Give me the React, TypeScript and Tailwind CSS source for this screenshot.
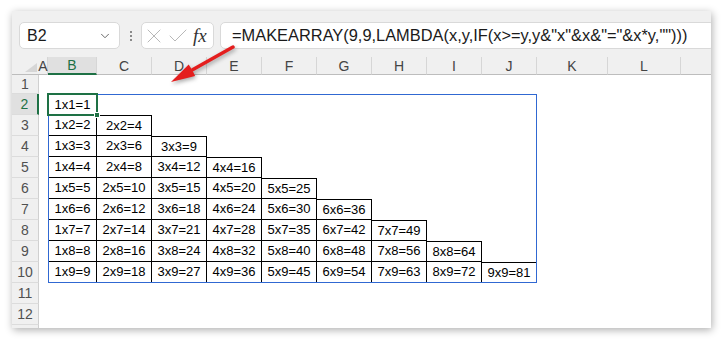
import clsx from 'clsx'
import { ChevronDown, X, Check } from 'lucide-react'

const cols = [
  { name: 'A', w: 'w-[9px]' },
  { name: 'B', w: 'w-[49px]', active: true },
  { name: 'C', w: 'w-[55px]' },
  { name: 'D', w: 'w-[55px]' },
  { name: 'E', w: 'w-[55px]' },
  { name: 'F', w: 'w-[55px]' },
  { name: 'G', w: 'w-[55px]' },
  { name: 'H', w: 'w-[55px]' },
  { name: 'I', w: 'w-[55px]' },
  { name: 'J', w: 'w-[55px]' },
  { name: 'K', w: 'w-[71px]' },
  { name: 'L', w: 'w-[73px]' },
  { name: '', w: 'flex-1' },
]

const rows = [1, 2, 3, 4, 5, 6, 7, 8, 9, 10, 11, 12, 13]

const cells: { x: number; y: number }[] = []
for (let y = 1; y <= 9; y++) {
  for (let x = 1; x <= 9; x++) cells.push({ x, y })
}

export default function App() {
  return (
    <div className="w-[723px] h-[341px] bg-white pl-[12px] pt-[11px] font-['Liberation_Sans',Arial,sans-serif]">
      <div className="relative w-[699px] h-[317px] overflow-hidden bg-[#f0f0f0] shadow-[1px_2px_8px_rgba(0,0,0,0.32)]">
        {/* Formula bar */}
        <div className="flex items-start h-[46px] pt-[11px] pl-[7px]">
          <div className="flex items-center justify-between w-[101px] h-[27px] rounded-[5px] border border-[#d9d9d9] bg-white pl-[7px] pr-[7px] text-[16px] text-[#1a1a1a]">
            <span>B2</span>
            <ChevronDown size={14} strokeWidth={1.5} className="text-[#555]" />
          </div>
          <div className="flex w-[21px] h-[27px] items-center justify-center">
            <div className="flex flex-col gap-[2px]">
              <span className="w-[2px] h-[2px] bg-[#8a8a8a]" />
              <span className="w-[2px] h-[2px] bg-[#8a8a8a]" />
              <span className="w-[2px] h-[2px] bg-[#8a8a8a]" />
            </div>
          </div>
          <div className="flex items-center w-[73px] h-[27px] rounded-[5px] border border-[#d9d9d9] bg-white">
            <X size={24} strokeWidth={1} className="text-[#b8b8b8]" />
            <Check size={24} strokeWidth={1} className="text-[#b8b8b8]" />
            <span className="ml-[3px] font-['Liberation_Serif',serif] italic text-[19px] leading-none text-[#333]">fx</span>
          </div>
          <div className="flex items-center flex-1 ml-[6px] -mr-[4px] h-[27px] rounded-[5px] border border-[#d9d9d9] bg-white pl-[11px] text-[16.4px] text-[#1a1a1a] whitespace-nowrap">
            =MAKEARRAY(9,9,LAMBDA(x,y,IF(x&gt;=y,y&amp;"x"&amp;x&amp;"="&amp;x*y,"")))
          </div>
        </div>

        {/* Column headers */}
        <div className="flex h-[18px] text-[14px] text-[#444]">
          <div className="relative w-[27px] border-b border-[#bdbdbd]">
            <svg className="absolute left-[13px] top-[6px]" width="12" height="9" viewBox="0 0 12 9">
              <polygon points="12,0 12,9 0,9" fill="#d6d6d6" />
            </svg>
          </div>
          {cols.map((c, i) => (
            <div
              key={i}
              className={clsx(
                'flex items-center justify-center overflow-visible leading-none',
                c.w,
                i < cols.length - 1 && 'border-r border-[#d6d6d6]',
                c.active ? 'bg-[#e0e0e0] border-b-2 border-b-[#1e7145] text-[#1e7145]' : 'border-b border-b-[#bdbdbd]'
              )}
            >
              {c.name}
            </div>
          ))}
        </div>

        {/* Sheet body */}
        <div className="flex">
          <div className="flex flex-col w-[27px] text-[14px] text-[#505050]">
            {rows.map((r) => (
              <div
                key={r}
                className={clsx(
                  'flex items-center justify-center border-b border-[#dcdcdc]',
                  r === 1 ? 'h-[19px]' : 'h-[21px]',
                  r === 2 ? 'bg-[#e0e0e0] text-[#1e7145] border-r-2 border-r-[#1e7145]' : 'border-r border-r-[#d0d0d0]'
                )}
              >
                {r}
              </div>
            ))}
          </div>
          <div className="flex-1 h-[280px] bg-white pl-[9px] pt-[19px]">
            <div className="relative w-[489px] h-[189px]">
              <div className="grid grid-cols-[49px_repeat(8,55px)] grid-rows-[repeat(9,21px)] text-[13px] text-black">
                {cells.map(({ x, y }) => (
                  <div
                    key={`${x}-${y}`}
                    className={clsx(
                      'flex items-center justify-center whitespace-nowrap',
                      x <= y && 'border-r border-b border-black',
                      x <= y && x === 1 && 'border-l',
                      x <= y && x === y && 'border-t'
                    )}
                  >
                    {x <= y ? `${x}x${y}=${x * y}` : ''}
                  </div>
                ))}
              </div>
              <div className="pointer-events-none absolute inset-0 border border-[#3068d2]" />
              <div className="pointer-events-none absolute -left-[1px] -top-[1px] w-[51px] h-[23px] border-2 border-[#1e7145]">
                <span className="absolute -right-[4px] -bottom-[4px] w-[6px] h-[6px] bg-[#1e7145] border border-white" />
              </div>
            </div>
          </div>
        </div>

        {/* Red annotation arrow */}
        <svg
          className="pointer-events-none absolute left-0 top-0 drop-shadow-[1px_2px_2px_rgba(0,0,0,0.35)]"
          width="699"
          height="317"
          viewBox="0 0 699 317"
        >
          <line x1="221" y1="36" x2="181" y2="58.5" stroke="#e41e1e" strokeWidth="3.5" strokeLinecap="round" />
          <polygon points="159,71 176.7,53.5 180.5,59.5 183.1,64.9" fill="#e41e1e" />
        </svg>
      </div>
    </div>
  )
}
